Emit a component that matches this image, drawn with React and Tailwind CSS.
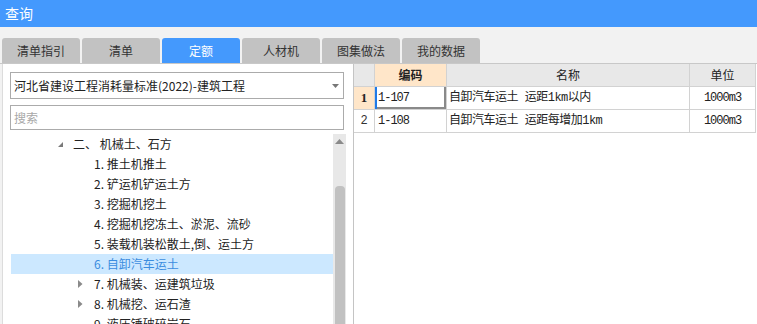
const tabs = ["清单指引", "清单", "定额", "人材机", "图集做法", "我的数据"];

const tree = [
  { level: 0, label: "二、 机械土、石方", icon: "open" },
  { level: 1, label: "1. 推土机推土" },
  { level: 1, label: "2. 铲运机铲运土方" },
  { level: 1, label: "3. 挖掘机挖土" },
  { level: 1, label: "4. 挖掘机挖冻土、淤泥、流砂" },
  { level: 1, label: "5. 装载机装松散土,倒、运土方" },
  { level: 1, label: "6. 自卸汽车运土", selected: true },
  { level: 1, label: "7. 机械装、运建筑垃圾", icon: "closed" },
  { level: 1, label: "8. 机械挖、运石渣", icon: "closed" },
  { level: 1, label: "9. 液压锤破碎岩石" },
];

const rows = [
  { no: "1", code: "1-107", name: "自卸汽车运土 运距1km以内", unit: "1000m3", active: true },
  { no: "2", code: "1-108", name: "自卸汽车运土 运距每增加1km", unit: "1000m3" },
];

const TreeIcon = ({ type }) => {
  if (type === "open")
    return (
      <svg width="5" height="5" viewBox="0 0 5 5">
        <polygon points="5,0 5,5 0,5" fill="#7a7a7a" />
      </svg>
    );
  if (type === "closed")
    return (
      <svg width="5" height="8" viewBox="0 0 5 8">
        <polygon points="0,0 4.5,4 0,8" fill="#8a8a8a" />
      </svg>
    );
  return null;
};

export default function App() {
  return (
    <div className="w-[757px] h-[324px] overflow-hidden bg-[#f2f2f2] flex flex-col font-['Noto_Sans_CJK_SC',sans-serif] text-[#222]">
      {/* title bar */}
      <div className="h-[27px] shrink-0 bg-[#4499fd] text-white text-[14px] pl-[5px] flex items-center">
        查询
      </div>

      {/* tabs */}
      <div className="h-[37px] shrink-0 flex items-end gap-[2px] px-[2px] border-b border-[#c8c8c8]">
        {tabs.map((t) => (
          <div
            key={t}
            className={
              t === "定额"
                ? "w-[78px] h-[25px] rounded-t-[3px] bg-[#4499fd] text-white text-[12px] flex items-center justify-center"
                : "w-[78px] h-[25px] rounded-t-[3px] bg-[#c2c2c2] text-[#333] text-[12px] flex items-center justify-center"
            }
          >
            {t}
          </div>
        ))}
      </div>

      <div className="flex-1 flex min-h-0">
        {/* left panel */}
        <div className="ml-[2px] w-[351px] shrink-0 bg-white border-l border-[#dcdcdc] pl-[7px] pt-[8px] flex flex-col">
          <div className="w-[334px] h-[27px] border border-[#ababab] flex items-center justify-between pl-[3px] pr-[4px] text-[12px] text-[#222]">
            <span>河北省建设工程消耗量标准(2022)-建筑工程</span>
            <svg width="7" height="4" viewBox="0 0 7 4">
              <polygon points="0,0 7,0 3.5,4" fill="#777" />
            </svg>
          </div>
          <div className="mt-[6px] w-[334px] h-[25px] border border-[#ababab] flex items-center pl-[3px] text-[12px] text-[#a8a8a8]">
            搜索
          </div>

          <div className="mt-[4px] flex flex-1 min-h-0">
            <div className="ml-[1px] w-[322px] flex flex-col">
              {tree.map((n) => (
                <div
                  key={n.label}
                  className={
                    (n.level === 0 ? "pl-[47px] " : "pl-[67px] ") +
                    (n.selected ? "bg-[#cce8ff] text-[#3b8de0] " : "text-[#222] ") +
                    "h-[20px] shrink-0 flex items-center text-[12px]"
                  }
                >
                  <span
                    className={
                      n.level === 0
                        ? "w-[15px] flex items-center"
                        : "w-[16px] flex items-center"
                    }
                  >
                    <TreeIcon type={n.icon} />
                  </span>
                  <span>{n.label}</span>
                </div>
              ))}
            </div>
            {/* scrollbar */}
            <div className="w-[13px] bg-[#e8e8e8] flex flex-col items-center">
              <div className="h-[12px] flex items-center justify-center pt-[2px]">
                <svg width="9" height="5" viewBox="0 0 9 5">
                  <polygon points="4.5,0 9,5 0,5" fill="#8a8a8a" />
                </svg>
              </div>
              <div className="mt-[40px] w-[10px] flex-1 bg-[#c1c1c1] rounded-t-[4px]" />
            </div>
          </div>
        </div>

        {/* right panel */}
        <div className="flex-1 bg-white border-l border-[#c4c4c4]">
          <div className="grid grid-cols-[21px_72px_243px_66px] text-[12px]">
            <div className="h-[23px] bg-[#e8e8e8] border-r border-b border-[#d2d2d2]" />
            <div className="h-[23px] bg-[#ffe6c9] border-r border-b border-[#d2d2d2] font-bold flex items-center justify-center">
              编码
            </div>
            <div className="h-[23px] bg-[#e8e8e8] border-r border-b border-[#d2d2d2] flex items-center justify-center">
              名称
            </div>
            <div className="h-[23px] bg-[#e8e8e8] border-r border-b border-[#d2d2d2] flex items-center justify-center">
              单位
            </div>

            {rows.map((r) => (
              <div key={r.no} className="contents">
                <div
                  className={
                    r.active
                      ? "h-[23px] bg-[#ffe6c9] border-r border-b border-[#d2d2d2] flex items-center justify-center font-['Liberation_Serif',serif] font-bold text-[13px]"
                      : "h-[23px] border-r border-b border-[#d2d2d2] flex items-center justify-center font-['Liberation_Mono',monospace] text-[12px] text-[#333]"
                  }
                >
                  {r.no}
                </div>
                <div
                  className={
                    (r.active
                      ? "shadow-[inset_2px_0_0_#1f7ae8,inset_-2px_-2px_0_#8a8a8a] "
                      : "") +
                    "h-[23px] border-r border-b border-[#d2d2d2] flex items-center pl-[3px] font-['Liberation_Mono','Noto_Sans_CJK_SC',monospace] tracking-[-1px]"
                  }
                >
                  {r.code}
                </div>
                <div className="h-[23px] border-r border-b border-[#d2d2d2] flex items-center pl-[2px] whitespace-pre font-['Liberation_Mono','Noto_Sans_CJK_SC',monospace] tracking-[-0.5px]">
                  {r.name}
                </div>
                <div className="h-[23px] border-r border-b border-[#d2d2d2] flex items-center justify-center font-['Liberation_Mono',monospace] tracking-[-1px]">
                  {r.unit}
                </div>
              </div>
            ))}
          </div>
        </div>
      </div>
    </div>
  );
}
